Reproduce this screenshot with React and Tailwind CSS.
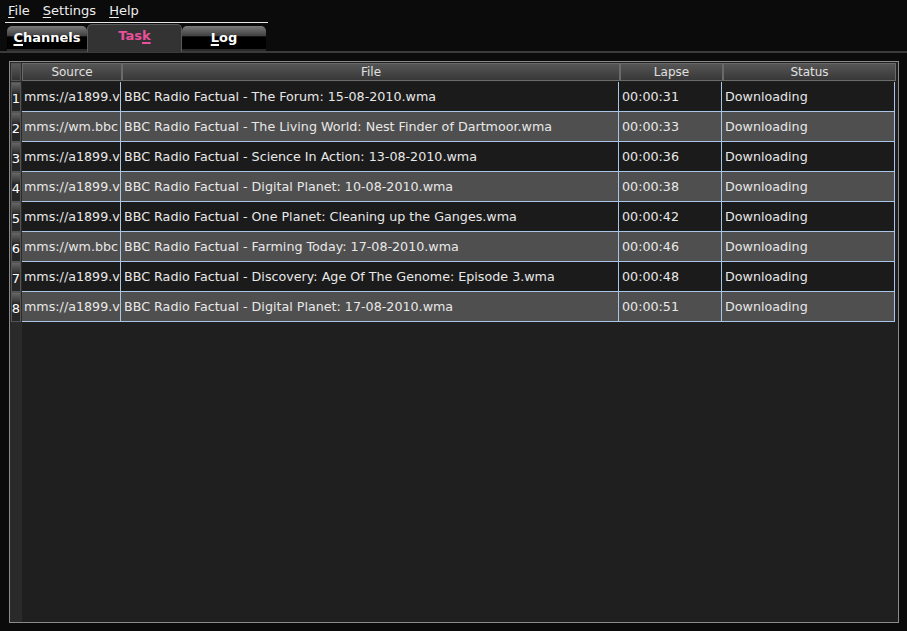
const rows = [
  ["mms://a1899.v", "BBC Radio Factual - The Forum: 15-08-2010.wma", "00:00:31"],
  ["mms://wm.bbc", "BBC Radio Factual - The Living World: Nest Finder of Dartmoor.wma", "00:00:33"],
  ["mms://a1899.v", "BBC Radio Factual - Science In Action: 13-08-2010.wma", "00:00:36"],
  ["mms://a1899.v", "BBC Radio Factual - Digital Planet: 10-08-2010.wma", "00:00:38"],
  ["mms://a1899.v", "BBC Radio Factual - One Planet: Cleaning up the Ganges.wma", "00:00:42"],
  ["mms://wm.bbc", "BBC Radio Factual - Farming Today: 17-08-2010.wma", "00:00:46"],
  ["mms://a1899.v", "BBC Radio Factual - Discovery: Age Of The Genome: Episode 3.wma", "00:00:48"],
  ["mms://a1899.v", "BBC Radio Factual - Digital Planet: 17-08-2010.wma", "00:00:51"],
];

function Tab({ children, active, w }) {
  if (active) {
    return (
      <div className={`${w} h-[28px] mt-[1px] rounded-t-[5px] border border-b-0 border-[#5a5a5a] bg-[#333333] flex justify-center pt-[1px] text-[13px] font-bold text-[#e8509c]`}>
        {children}
      </div>
    );
  }
  return (
    <div className={`${w} h-[25px] mt-[3px] rounded-t-[5px] border-b-[2px] border-[#2a2a2a] bg-[linear-gradient(#7a7a7a,#3e3e3e_45%,#000_46%,#000)] flex justify-center pt-[2px] text-[13px] font-bold text-white`}>
      {children}
    </div>
  );
}

export default function App() {
  return (
    <div className="w-[907px] h-[631px] bg-[#0b0b0b] text-[#e8e8e8] font-['DejaVu_Sans',sans-serif] overflow-hidden">
      <div className="flex gap-[13px] pl-[8px] h-[22px] pt-[1px] text-[13px] text-[#eeeeee]">
        <span><span className="underline underline-offset-2">F</span>ile</span>
        <span><span className="underline underline-offset-2">S</span>ettings</span>
        <span><span className="underline underline-offset-2">H</span>elp</span>
      </div>
      <div className="ml-[5px] w-[263px] h-px bg-[#e8e8e8]" />
      <div className="flex pl-[7px] h-[28px]">
        <Tab w="w-[80px]"><span><span className="underline underline-offset-2 decoration-2">C</span>hannels</span></Tab>
        <Tab w="w-[95px]" active><span>Tas<span className="underline underline-offset-2 decoration-2">k</span></span></Tab>
        <Tab w="w-[84px]"><span><span className="underline underline-offset-2 decoration-2">L</span>og</span></Tab>
      </div>
      <div className="h-[2px] bg-[#3a3a3a]" />
      <div className="mt-[8px] ml-[9px] w-[890px] h-[562px] border border-[#8a8a8a] bg-[#1f1f1f] flex">
        <div className="w-[12px] bg-[#2a2a2a] flex flex-col pt-[1px]">
          <div className="h-[18px] mx-[1px] border border-[#555] bg-[linear-gradient(#5a5a5a,#333)]" />
          <div className="h-px" />
          {rows.map((r, i) => (
            <div key={i} className="h-[30px] mx-[1px] border border-[#555] bg-[linear-gradient(#666,#3a3a3a_30%,#262626_40%,#262626)] flex items-end justify-center pb-[6px] text-[13px] leading-none text-white">
              {i + 1}
            </div>
          ))}
        </div>
        <div className="flex-1 flex flex-col pt-[1px]">
          <div className="flex h-[18px] text-[12px] text-[#e0e0e0]">
            {[["Source", "w-[100px]"], ["File", "w-[498px]"], ["Lapse", "w-[103px]"], ["Status", "w-[173px]"]].map(([t, w]) => (
              <div key={t} className={`${w} border border-[#6a6a6a] bg-[linear-gradient(#555,#383838)] flex items-center justify-center leading-none`}>
                {t}
              </div>
            ))}
          </div>
          <div className="h-px" />
          <div className="w-[873px] border-r border-[#a9c6e6]">
            {rows.map((r, i) => (
              <div key={i} className={`flex h-[30px] items-center text-[12.7px] border-b border-[#a9c6e6] ${i % 2 ? "bg-[#4f4f4f]" : "bg-[#1b1b1b]"}`}>
                <div className="w-[99px] h-full flex items-center pl-[2px] overflow-hidden whitespace-nowrap border-r border-[#a9c6e6]">{r[0]}</div>
                <div className="w-[498px] h-full flex items-center pl-[3px] whitespace-nowrap border-r border-[#a9c6e6]">{r[1]}</div>
                <div className="w-[103px] h-full flex items-center pl-[3px] border-r border-[#a9c6e6]">{r[2]}</div>
                <div className="flex-1 h-full flex items-center pl-[3px]">Downloading</div>
              </div>
            ))}
          </div>
        </div>
      </div>
    </div>
  );
}
